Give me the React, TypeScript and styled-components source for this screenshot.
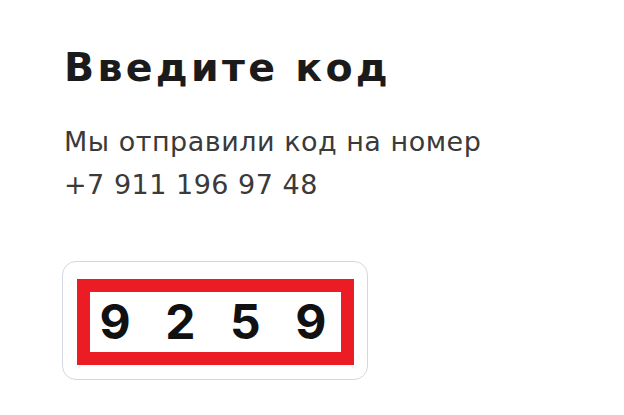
import React from "react";
import styled, { createGlobalStyle } from "styled-components";

const Global = createGlobalStyle`
  html, body { margin: 0; padding: 0; background: #ffffff; }
  body { font-family: "DejaVu Sans", "Noto Sans", sans-serif; }
`;

const Page = styled.main`
  width: 624px;
  height: 415px;
  box-sizing: border-box;
  padding: 43px 0 0 64px;
  display: flex;
  flex-direction: column;
  align-items: flex-start;
`;

const Title = styled.h1`
  margin: 0;
  font-family: "DejaVu Sans", sans-serif;
  font-size: 39.5px;
  line-height: 49px;
  font-weight: 700;
  letter-spacing: 3.3px;
  color: #1b1b1b;
`;

const Subtitle = styled.p`
  margin: 28px 0 0;
  font-family: "DejaVu Sans", sans-serif;
  font-size: 27px;
  line-height: 43px;
  font-weight: 400;
  letter-spacing: 0.5px;
  color: #3a3a3a;
`;

const CodeField = styled.div`
  margin: 55px 0 0 -2px;
  width: 306px;
  height: 119px;
  box-sizing: border-box;
  border: 1.5px solid #d3d8df;
  border-radius: 14px;
  display: flex;
  align-items: center;
  justify-content: center;
`;

const Highlight = styled.div`
  width: 277px;
  height: 86px;
  box-sizing: border-box;
  border: 13px solid #ec1c24;
  display: flex;
  align-items: center;
  justify-content: space-between;
  padding: 0 14px 0 10px;
  margin-top: 2px;
`;

const Digit = styled.span`
  font-family: "Inter", sans-serif;
  font-size: 48px;
  font-weight: 700;
  color: #111111;
  line-height: 1;
`;

export default function App() {
  const code = ["9", "2", "5", "9"];
  return (
    <>
      <Global />
      <Page>
        <Title>Введите код</Title>
        <Subtitle>
          Мы отправили код на номер
          <br />
          +7 911 196 97 48
        </Subtitle>
        <CodeField>
          <Highlight>
            {code.map((d, i) => (
              <Digit key={i}>{d}</Digit>
            ))}
          </Highlight>
        </CodeField>
      </Page>
    </>
  );
}
